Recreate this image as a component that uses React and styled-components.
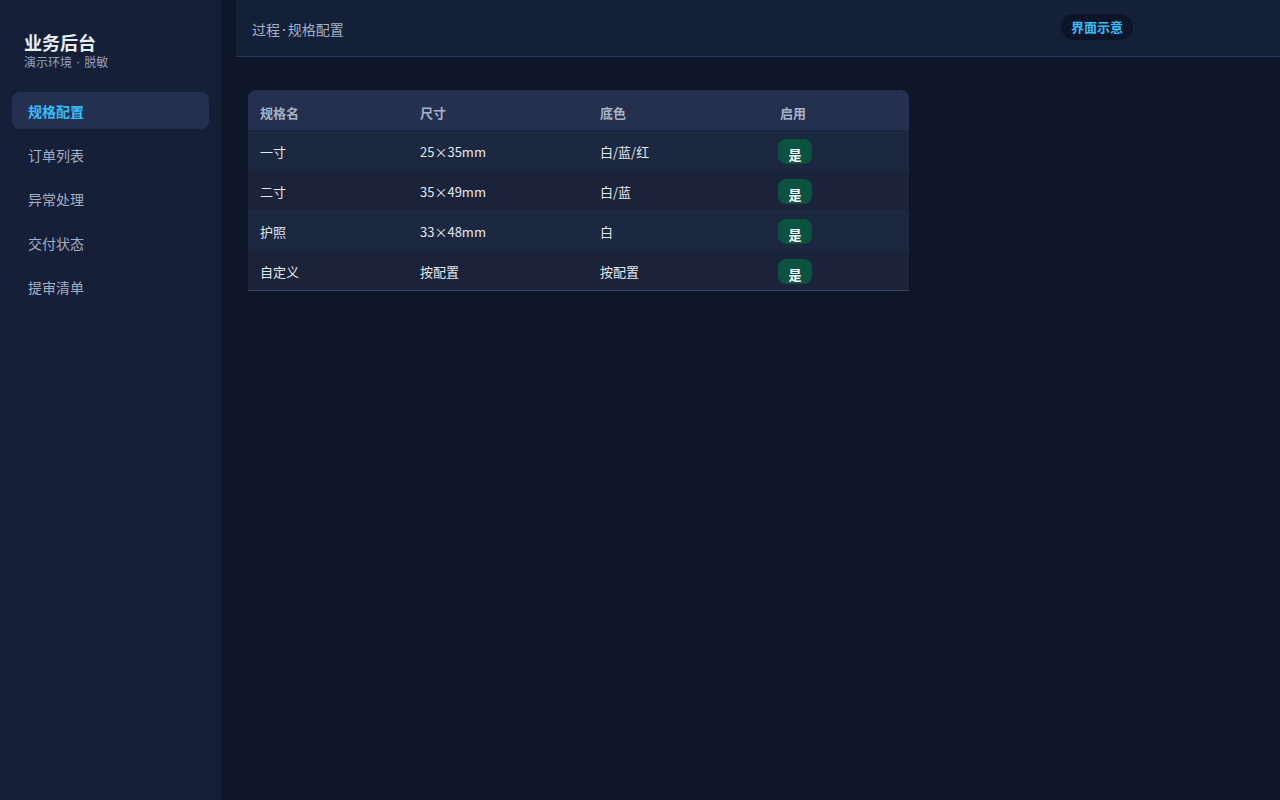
import React from "react";
import styled, { createGlobalStyle } from "styled-components";

const GlobalStyle = createGlobalStyle`
  html, body {
    margin: 0;
    padding: 0;
    background: #0e1629;
    font-family: "Noto Sans CJK SC", "Noto Sans", sans-serif;
  }
  * { box-sizing: border-box; }
`;

const nav = ["规格配置", "订单列表", "异常处理", "交付状态", "提审清单"];

const specs = [
  { name: "一寸", size: "25×35mm", color: "白/蓝/红", on: true },
  { name: "二寸", size: "35×49mm", color: "白/蓝", on: true },
  { name: "护照", size: "33×48mm", color: "白", on: true },
  { name: "自定义", size: "按配置", color: "按配置", on: true },
];

const App = () => {
  return (
    <Layout>
      <GlobalStyle />
      <Sidebar>
        <Brand>
          <BrandTitle>业务后台</BrandTitle>
          <BrandSub>
            演示环境 <Dot>·</Dot> 脱敏
          </BrandSub>
        </Brand>
        <NavList>
          {nav.map((item, i) => (
            <NavItem key={item} $active={i === 0}>
              {item}
            </NavItem>
          ))}
        </NavList>
      </Sidebar>
      <Main>
        <Header>
          <Crumb>
            过程<Dot>·</Dot>规格配置
          </Crumb>
          <Tag>界面示意</Tag>
        </Header>
        <Content>
          <Table>
            <thead>
              <tr>
                <Th $w={160}>规格名</Th>
                <Th $w={180}>尺寸</Th>
                <Th $w={180}>底色</Th>
                <Th>启用</Th>
              </tr>
            </thead>
            <tbody>
              {specs.map((s, i) => (
                <Row key={s.name} $odd={i % 2 === 1}>
                  <Td>{s.name}</Td>
                  <Td>{s.size}</Td>
                  <Td>{s.color}</Td>
                  <Td>
                    <Yes>{s.on ? "是" : "否"}</Yes>
                  </Td>
                </Row>
              ))}
            </tbody>
          </Table>
        </Content>
      </Main>
    </Layout>
  );
};

const Layout = styled.div`
  display: flex;
  min-height: 800px;
  background: #0e1629;
`;

const Sidebar = styled.aside`
  width: 221px;
  flex-shrink: 0;
  background: #151f38;
  padding: 30px 12px 0;
`;

const Brand = styled.div`
  padding: 0 12px;
  margin-bottom: 22px;
`;

const BrandTitle = styled.div`
  font-size: 18px;
  font-weight: 700;
  color: #e8eef8;
  line-height: 24px;
`;

const BrandSub = styled.div`
  font-size: 12px;
  color: #94a2b8;
  line-height: 16px;
`;

const Dot = styled.span`
  font-family: "Noto Sans CJK JP", "Noto Sans", sans-serif;
`;

const NavList = styled.nav`
  display: flex;
  flex-direction: column;
  gap: 7px;
  width: 197px;
`;

const NavItem = styled.div`
  height: 37px;
  display: flex;
  align-items: center;
  padding: 0 16px;
  border-radius: 8px;
  font-size: 14px;
  font-weight: ${(p) => (p.$active ? 700 : 400)};
  color: ${(p) => (p.$active ? "#38bdf8" : "#a3aec2")};
  background: ${(p) => (p.$active ? "#243050" : "transparent")};
`;

const Main = styled.main`
  flex: 1;
  padding-left: 15px;
`;

const Header = styled.header`
  height: 57px;
  background: #141f38;
  border-bottom: 1px solid #2e3c5a;
  display: flex;
  align-items: center;
  padding: 0 147px 0 16px;
`;

const Crumb = styled.div`
  flex: 1;
  padding-top: 1px;
  font-size: 14px;
  color: #a5b0c3;
`;

const Tag = styled.span`
  height: 26px;
  margin-top: -3px;
  padding: 0 10px;
  display: flex;
  align-items: center;
  border-radius: 13px;
  background: #0d1628;
  color: #38bdf8;
  font-size: 13px;
  font-weight: 700;
`;

const Content = styled.section`
  padding: 33px 12px;
`;

const Table = styled.table`
  width: 661px;
  border-collapse: separate;
  border-spacing: 0;
  border-bottom: 1px solid #34425f;
`;

const Th = styled.th`
  width: ${(p) => (p.$w ? `${p.$w}px` : "auto")};
  height: 40px;
  padding: 4px 12px 0;
  text-align: left;
  font-size: 13px;
  font-weight: 700;
  color: #a6b2c6;
  background: #24304e;

  &:first-child {
    border-top-left-radius: 8px;
  }
  &:last-child {
    border-top-right-radius: 8px;
  }
`;

const Row = styled.tr`
  background: ${(p) => (p.$odd ? "#1a233a" : "#1c2740")};
`;

const Td = styled.td`
  height: 40px;
  padding: 2px 12px 0;
  font-size: 13px;
  color: #e2e8f0;
`;

const Yes = styled.span`
  display: inline-flex;
  align-items: center;
  justify-content: center;
  width: 34px;
  height: 25px;
  margin: 1px 0 0 -2px;
  padding-top: 5px;
  border-radius: 8px;
  background: #0b5240;
  color: #ffffff;
  font-size: 13px;
  font-weight: 700;
`;

export default App;
